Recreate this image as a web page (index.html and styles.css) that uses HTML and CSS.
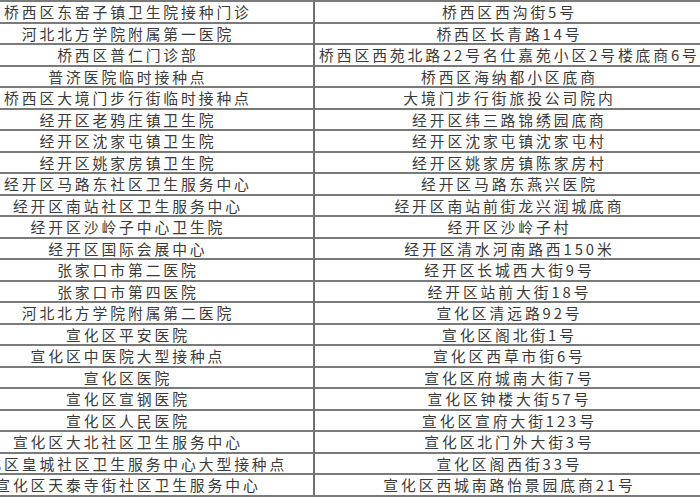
FILE: index.html
```html
<!DOCTYPE html>
<html lang="zh-CN">
<head>
<meta charset="utf-8">
<title>接种点列表</title>
<link rel="stylesheet" href="styles.css">
</head>
<body>
<div class="sheet">
  <div class="cell name">桥西区东窑子镇卫生院接种门诊</div><div class="cell addr">桥西区西沟街5号</div>
  <div class="cell name">河北北方学院附属第一医院</div><div class="cell addr">桥西区长青路14号</div>
  <div class="cell name">桥西区普仁门诊部</div><div class="cell addr">桥西区西苑北路22号名仕嘉苑小区2号楼底商6号</div>
  <div class="cell name">普济医院临时接种点</div><div class="cell addr">桥西区海纳都小区底商</div>
  <div class="cell name">桥西区大境门步行街临时接种点</div><div class="cell addr">大境门步行街旅投公司院内</div>
  <div class="cell name">经开区老鸦庄镇卫生院</div><div class="cell addr">经开区纬三路锦绣园底商</div>
  <div class="cell name">经开区沈家屯镇卫生院</div><div class="cell addr">经开区沈家屯镇沈家屯村</div>
  <div class="cell name">经开区姚家房镇卫生院</div><div class="cell addr">经开区姚家房镇陈家房村</div>
  <div class="cell name">经开区马路东社区卫生服务中心</div><div class="cell addr">经开区马路东燕兴医院</div>
  <div class="cell name">经开区南站社区卫生服务中心</div><div class="cell addr">经开区南站前街龙兴润城底商</div>
  <div class="cell name">经开区沙岭子中心卫生院</div><div class="cell addr">经开区沙岭子村</div>
  <div class="cell name">经开区国际会展中心</div><div class="cell addr">经开区清水河南路西150米</div>
  <div class="cell name">张家口市第二医院</div><div class="cell addr">经开区长城西大街9号</div>
  <div class="cell name">张家口市第四医院</div><div class="cell addr">经开区站前大街18号</div>
  <div class="cell name">河北北方学院附属第二医院</div><div class="cell addr">宣化区清远路92号</div>
  <div class="cell name">宣化区平安医院</div><div class="cell addr">宣化区阁北街1号</div>
  <div class="cell name">宣化区中医院大型接种点</div><div class="cell addr">宣化区西草市街6号</div>
  <div class="cell name">宣化区医院</div><div class="cell addr">宣化区府城南大街7号</div>
  <div class="cell name">宣化区宣钢医院</div><div class="cell addr">宣化区钟楼大街57号</div>
  <div class="cell name">宣化区人民医院</div><div class="cell addr">宣化区宣府大街123号</div>
  <div class="cell name">宣化区大北社区卫生服务中心</div><div class="cell addr">宣化区北门外大街3号</div>
  <div class="cell name">宣化区皇城社区卫生服务中心大型接种点</div><div class="cell addr">宣化区阁西街33号</div>
  <div class="cell name">宣化区天泰寺街社区卫生服务中心</div><div class="cell addr">宣化区西城南路怡景园底商21号</div>
</div>
</body>
</html>
```

FILE: styles.css
```css
html, body {
  margin: 0;
  padding: 0;
  overflow: hidden;
  background: #ffffff;
}

.sheet {
  display: grid;
  grid-template-columns: 375px 386px;
  grid-auto-rows: 21.5px;
  margin-left: -60px;
  border-top: 2px solid #7a7a7a;
  font-family: "Noto Sans CJK SC", "Noto Sans", sans-serif;
  font-size: 14.8px;
  letter-spacing: 2.9px;
  color: #3a3a3a;
}

.cell {
  box-sizing: border-box;
  display: flex;
  align-items: center;
  justify-content: center;
  padding-left: 2.9px;
  border-bottom: 2px solid #7a7a7a;
  white-space: nowrap;
  line-height: 19px;
}

.name {
  border-right: 2px solid #6e6e6e;
}
```
